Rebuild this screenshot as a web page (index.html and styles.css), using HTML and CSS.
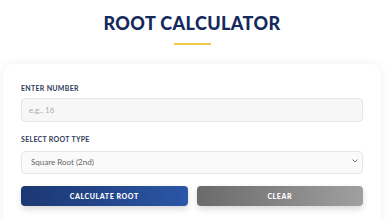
FILE: index.html
```html
<!DOCTYPE html>
<html lang="en">
    <head>
        <meta charset="UTF-8" />
        <meta name="viewport" content="width=device-width, initial-scale=1.0" />
        <title>Root Calculator</title>
        <link rel="stylesheet" href="styles.css">
    </head>
    <body>
        <header class="header">
            <h1>Root Calculator</h1>
            <div class="underline"></div>
        </header>

        <div class="card">
            <div class="form-group">
                <label for="number">Enter Number</label>
                <input type="number" id="number" placeholder="e.g., 16" />
            </div>

            <div class="form-group">
                <label for="root-type">Select Root Type</label>
                <div class="select-wrap">
                    <select id="root-type">
                        <option>Square Root (2nd)</option>
                        <option>Cube Root (3rd)</option>
                        <option>Fourth Root (4th)</option>
                    </select>
                    <svg class="chevron" width="8" height="6" viewBox="0 0 8 6">
                        <path d="M1.5 1.5 L4 4 L6.5 1.5" fill="none" stroke="#666" stroke-width="0.9" />
                    </svg>
                </div>
            </div>

            <div class="buttons">
                <button class="btn btn-calc">Calculate Root</button>
                <button class="btn btn-clear">Clear</button>
            </div>
        </div>
    </body>
</html>
```

FILE: styles.css
```css
body {
    font-family: 'Lato', 'Open Sans', sans-serif;
    background-color: #fff;
    margin: 0;
    padding: 0 8px 0 3px;
    overflow: hidden;
}
.header {
    text-align: center;
    padding-top: 12px;
    height: 52px;
}
h1 {
    margin: 0;
    font-size: 18px;
    line-height: 22px;
    font-weight: 900;
    letter-spacing: 0.4px;
    text-transform: uppercase;
    color: #142a5c;
}
.underline {
    width: 37px;
    height: 2px;
    background-color: #f2c94c;
    margin: 9px auto 0;
}
.card {
    background-color: #fff;
    border-radius: 10px;
    box-shadow: 0 0 8px rgba(0, 0, 0, 0.07);
    padding: 19px 18px 18px;
    height: 160px;
}
.form-group {
    display: flex;
    flex-direction: column;
    gap: 5px;
    margin-bottom: 12px;
}
label {
    font-size: 7px;
    font-weight: 700;
    letter-spacing: 0.3px;
    text-transform: uppercase;
    color: #2e3a58;
    line-height: 10px;
}
input,
select {
    font-family: inherit;
    font-size: 8px;
    height: 24px;
    box-sizing: border-box;
    padding: 0 7px;
    border: 1px solid #e6e6e6;
    border-radius: 4px;
    background-color: #f7f7f7;
    color: #555;
    width: 100%;
}
input::placeholder {
    color: #aaa;
}
.select-wrap {
    position: relative;
}
select {
    appearance: none;
    height: 23px;
    background-color: #fafafa;
    padding-left: 9px;
    color: #666;
}
.chevron {
    position: absolute;
    right: 4px;
    top: 9px;
}
.buttons {
    display: flex;
    gap: 9px;
    margin-top: 11px;
}
.btn {
    flex: 1;
    height: 20px;
    border: none;
    border-radius: 4px;
    color: #fff;
    font-family: inherit;
    font-size: 7px;
    font-weight: 900;
    letter-spacing: 0.6px;
    text-transform: uppercase;
    cursor: pointer;
    box-shadow: 0 3px 6px rgba(0, 0, 0, 0.15);
}
.btn-calc {
    background: linear-gradient(90deg, #1b3872, #2b56a6);
}
.btn-clear {
    background: linear-gradient(90deg, #6a6a6a, #a0a0a0);
}
```
